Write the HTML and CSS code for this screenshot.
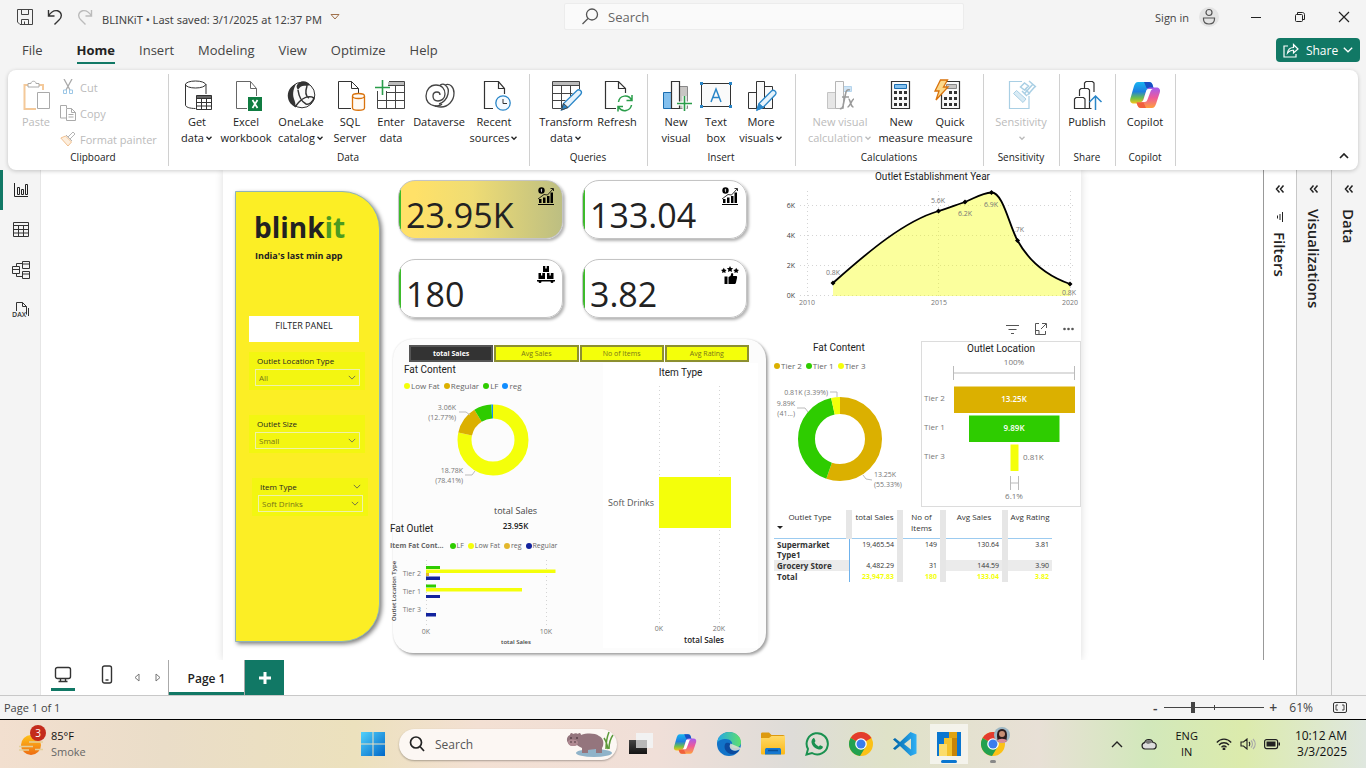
FILE: index.html
```html
<!DOCTYPE html>
<html lang="en">
<head>
<meta charset="utf-8">
<title>BLINKiT - Power BI Desktop</title>
<link rel="stylesheet" href="styles.css">
</head>
<body>
<svg class="defs" aria-hidden="true">
  <defs>
    <linearGradient id="cpA" x1="0" y1="0" x2="0" y2="1"><stop offset="0" stop-color="#18b4f0"/><stop offset=".45" stop-color="#1e7fe0"/><stop offset=".75" stop-color="#6fc04a"/><stop offset="1" stop-color="#f5c518"/></linearGradient>
    <linearGradient id="cpB" x1="0" y1="0" x2="0" y2="1"><stop offset="0" stop-color="#a45cf0"/><stop offset=".5" stop-color="#ee5a9a"/><stop offset="1" stop-color="#ffa03c"/></linearGradient>
    <linearGradient id="win" x1="0" y1="0" x2="1" y2="1"><stop offset="0" stop-color="#52d1fb"/><stop offset="1" stop-color="#0067c8"/></linearGradient>
    <linearGradient id="edge" x1="0" y1="0" x2="1" y2="0"><stop offset="0" stop-color="#23a7e8"/><stop offset="1" stop-color="#5fe06c"/></linearGradient>
    <linearGradient id="folder" x1="0" y1="0" x2="0" y2="1"><stop offset="0" stop-color="#ffd968"/><stop offset="1" stop-color="#fcb815"/></linearGradient>
    <linearGradient id="sun" x1="0" y1="0" x2="0" y2="1"><stop offset="0" stop-color="#ffc21a"/><stop offset="1" stop-color="#ee6c12"/></linearGradient>
    <linearGradient id="vs" x1="0" y1="0" x2="1" y2="0"><stop offset="0" stop-color="#0065a9"/><stop offset="1" stop-color="#2fb0f5"/></linearGradient>
    <linearGradient id="tv" x1="0" y1="0" x2="0" y2="1"><stop offset="0" stop-color="#444"/><stop offset="1" stop-color="#141414"/></linearGradient>
    <symbol id="copilot" viewBox="0 0 32 32">
      <path d="M9 3h11c2 0 3 1 3.600 3l.9 3h-3c-2 0-3 1-3.700 3l-3 9c-.8 2.500-2 3.500-4 3.500H5c-3 0-4.500-2-3.600-5L5 7c1-2.700 2-4 4-4z" fill="url(#cpA)"/>
      <path d="M15 3h5c2 0 3 1 3.600 3l.9 3h-7z" fill="#1a4fc4"/>
      <path d="M23 29H12c-2 0-3-1-3.600-3l-.9-2.500h3c2 0 3-1 3.700-3l3-8.500c.8-2.500 2-3.500 4-3.500h6c3 0 4.500 2 3.600 5L27 25c-1 2.700-2 4-4 4z" fill="url(#cpB)"/>
      <path d="M17 29h-5c-2 0-3-1-3.600-3l-.9-2.500h7z" fill="#f0603c"/>
      <path d="M19 10h5c-1 0-2 1-2.500 2.500l-3 8c-.6 1.700-1.500 2.500-3 2.500H12c1 0 2-1 2.500-2.500l2.500-8c.4-1.500 1-2.500 2-2.500z" fill="#fff"/>
    </symbol>
    <symbol id="chrome" viewBox="0 0 24 24">
      <circle cx="12" cy="12" r="12" fill="#fbc116"/>
      <path d="M12 12 1.600 6A12 12 0 0 1 22.400 6z" fill="#e33b2e"/>
      <path d="M1.600 6A12 12 0 0 0 11 24l5.800-9.500L12 12z" fill="#22a150"/>
      <circle cx="12" cy="12" r="5.800" fill="#fff"/><circle cx="12" cy="12" r="4.500" fill="#3b7ded"/>
    </symbol>
    <symbol id="growth" viewBox="0 0 18 18">
      <circle cx="4.500" cy="3.500" r="3.200"/><path d="M4.500 1.800v3.400M3.600 3h1.600" stroke="#ddd" stroke-width=".8" fill="none"/>
      <path d="M1 12 7 7.500l3.500.5L16 2M13.500 1.500H16.500V4" fill="none" stroke="#000" stroke-width=".8"/>
      <path d="M2 12h2.500v4H2zM6 10.500h2.500V16H6zM10 9h2.500v7H10zM13.500 5.500H16V16h-2.500zM1 17h16v1H1z"/>
    </symbol>
    <symbol id="chev" viewBox="0 0 8 8"><path d="M1.500 2.800 4 5.300l2.500-2.500" fill="none" stroke="currentColor" stroke-width="1.300"/></symbol>
    <symbol id="pane" viewBox="0 0 10 10"><path d="M4.500 1.500 1.500 5l3 3.500M8.500 1.500l-3 3.500 3 3.500" fill="none" stroke="#222" stroke-width="1.500"/></symbol>
  </defs>
</svg>

<header class="titlebar">
  <div class="title-left">
    <button class="icon-btn" aria-label="Save"><svg width="16" height="16" viewBox="0 0 16 16" fill="none" stroke="#444"><path d="M.5.5h15v15H3l-2.500-2.500zM4.500.5v5h7v-5M4.500 15.500v-5h7v5M7.500 12.500v3"/></svg></button>
    <button class="icon-btn" aria-label="Undo"><svg width="16" height="16" viewBox="0 0 16 16" fill="none" stroke="#333" stroke-width="1.400"><path d="M1.500 1v6h6M1.500 7C4 3 7 1 10.500 1.800 15 3 15.500 8 12 11l-4.500 4.500"/></svg></button>
    <button class="icon-btn" aria-label="Redo"><svg width="16" height="16" viewBox="0 0 16 16" fill="none" stroke="#bbb" stroke-width="1.400"><path d="M14.500 1v6h-6M14.500 7C12 3 9 1 5.500 1.800 1 3 .5 8 4 11l4.500 4.500"/></svg></button>
    <span class="doc-name">BLINKiT&nbsp;• Last saved: 3/1/2025 at 12:37 PM</span>
    <svg width="10" height="6" viewBox="0 0 10 6" fill="none" stroke="#a0714c"><path d="M1 .5h8L5 5z"/></svg>
  </div>
  <label class="search">
    <svg width="18" height="18" viewBox="0 0 18 18" fill="none" stroke="#555" stroke-width="1.300"><circle cx="11" cy="6.500" r="5.500"/><path d="M7 10.500 1.500 16"/></svg>
    <input type="text" placeholder="Search" aria-label="Search">
  </label>
  <div class="title-right">
    <a href="#" class="signin">Sign in</a>
    <span class="avatar"><svg width="14" height="18" viewBox="0 0 14 18" fill="none" stroke="#555" stroke-width="1.200"><circle cx="7" cy="4.500" r="3"/><path d="M1.500 10h11v1c0 3-2.200 5-5.500 5s-5.500-2-5.500-5z"/></svg></span>
    <button class="win-btn" aria-label="Minimize"><svg width="12" height="12" viewBox="0 0 12 12" stroke="#222"><path d="M1 6.500h10"/></svg></button>
    <button class="win-btn" aria-label="Restore"><svg width="12" height="12" viewBox="0 0 12 12" fill="none" stroke="#222"><rect x="1.500" y="3.500" width="7" height="7" rx="1"/><path d="M3.500 3V1.500h5c1 0 2 .8 2 2v5H9"/></svg></button>
    <button class="win-btn" aria-label="Close"><svg width="12" height="12" viewBox="0 0 12 12" stroke="#222" stroke-width="1.200"><path d="m1 1 10 10M11 1 1 11"/></svg></button>
  </div>
</header>

<nav class="tabs">
  <a href="#" class="tab tab-file">File</a>
  <a href="#" class="tab active">Home</a>
  <a href="#" class="tab">Insert</a>
  <a href="#" class="tab">Modeling</a>
  <a href="#" class="tab">View</a>
  <a href="#" class="tab">Optimize</a>
  <a href="#" class="tab">Help</a>
  <button class="share"><svg width="16" height="15" viewBox="0 0 16 15" fill="none" stroke="#fff" stroke-width="1.200"><path d="M5 3H1v11h12v-3M4.500 10c.5-4 3-5.500 6-5.500V1.500L15 6l-4.500 4V7.300C8 7 6 8 4.500 10z"/></svg>Share<svg width="10" height="6" viewBox="0 0 10 6" fill="none" stroke="#fff" stroke-width="1.300"><path d="m.8.8 4.200 4 4.200-4"/></svg></button>
</nav>

<section class="ribbon">
  <div class="group g-clip">
    <div class="items">
      <button class="tool w36 off"><svg class="ico" viewBox="0 0 32 32" fill="none"><path d="M8 6H4.500v24H16M19 6h4v5" stroke="#f4c99a" stroke-width="2"/><path d="M8 8V4.500h3c0-3 5-3 5 0h3V8z" stroke="#aaa"/><path d="M17.500 13.500h12v16h-12z" stroke="#aaa" fill="#fff"/></svg><span>Paste</span></button>
      <div class="minis">
        <button class="mini"><svg width="16" height="16" viewBox="0 0 16 16" fill="none" stroke="#aaa"><path d="m4 0 6 11M12 0 6 11" stroke-width="1.300"/><path d="M3.500 11h3v3.500h-3zM9.500 11h3v3.500h-3z" stroke="#9cc7e6"/></svg>Cut</button>
        <button class="mini"><svg width="16" height="16" viewBox="0 0 16 16" fill="none" stroke="#aaa"><path d="M6 13H.5V.500h6V3M6.500 3.500h5l4 4v8h-9zM11.500 3.500v4h4M8.500 9.500h5M8.500 12h5"/></svg>Copy</button>
        <button class="mini"><svg width="16" height="16" viewBox="0 0 16 16" fill="none" stroke="#b5b5b5"><path d="m6 4 6 6M8 6l5-5 2 2-5 5"/><path d="M5.500 5 .8 7l7.200 8 3.500-4z" stroke="#f0c090" fill="#fdeedd"/></svg>Format painter</button>
      </div>
    </div>
    <div class="glabel">Clipboard</div>
  </div>

  <div class="group g-data">
    <div class="items">
      <button class="tool w40"><svg class="ico" viewBox="0 0 32 32" fill="none" stroke="#333"><path d="M4.500 5v21c0 2 4 3.500 10 3.500M25 5v10"/><ellipse cx="14.500" cy="5.500" rx="10" ry="3.500"/><path d="M15.500 16.500h15v14h-15z" fill="#fff"/><path d="M15.500 17h15v2h-15z" fill="#999"/><path d="M15.500 19.500h15M15.500 23.500h15M15.500 27h15M20.500 19v11M25.500 19v11"/></svg><span>Get<br>data<svg class="cv"><use href="#chev"/></svg></span></button>
      <button class="tool w54"><svg class="ico" viewBox="0 0 32 32" fill="none" stroke="#666"><path d="M17 29.500H6.500v-27h14l6 7V17M20.500 2.500v7h6"/><rect x="18" y="18" width="14" height="14" fill="#107c41" stroke="none"/><path d="m22.500 21 5 8M27.500 21l-5 8" stroke="#fff" stroke-width="1.700"/></svg><span>Excel<br>workbook</span></button>
      <button class="tool w52"><svg class="ico" viewBox="0 0 32 32"><circle cx="17" cy="16" r="12.800" fill="#fafafa" stroke="#333"/><path d="M11 5c-6 2-9 8-8 14 1 5 4 7 7 9 1-3 0-5-1-8-2-6 0-11 2-15z" fill="#333"/><path d="M12 6c3-5 10-5 13 0l-3 1c-4-1-7 0-9 4-1-2-2-3-1-5z" fill="#333"/><path d="M13 11c1 7 4 12 8 14 3 1 7-2 8-6-5-3-12-1-19 9M22 7c-2 6-2 10 2 12" fill="none" stroke="#333" stroke-width="1.500"/></svg><span>OneLake<br>catalog<svg class="cv"><use href="#chev"/></svg></span></button>
      <button class="tool w42"><svg class="ico" viewBox="0 0 32 32" fill="none" stroke="#333"><path d="M17 29.500H4.500v-27h13l7 7V14M17.500 2.500v7h7"/><path d="M18.500 17v12c0 3 12 3 12 0V17" stroke="#d9730d" fill="#fffaf4" stroke-width="1.300"/><ellipse cx="24.500" cy="17" rx="6" ry="2.500" stroke="#d9730d" fill="#fffaf4" stroke-width="1.300"/></svg><span>SQL<br>Server</span></button>
      <button class="tool w36"><svg class="ico" viewBox="0 0 32 32" fill="none" stroke="#444"><path d="M2.500 12v17.500h27v-27H14"/><path d="M13 3h16v3H13z" fill="#bbb" stroke="none"/><path d="M13 6.500h16.500M12 13.500h17M2.500 21.500h27M11.500 12v17M20.500 7v22"/><path d="M0 8.500h15M7.500 1v15" stroke="#2a9d4a" stroke-width="1.600"/></svg><span>Enter<br>data</span></button>
      <button class="tool w56"><svg class="ico" viewBox="0 0 32 32" fill="none" stroke="#444" stroke-width="1.300"><path d="M12 27c-5-1-9-4-9-10S7 6 13 6s9 4 9 9-4 7-7 7-5-2-5-5 2-4 4-4 3 1 3 3M12 27c4 0 6-1 7-2M17 6c2-1 4-1 5 0"/><path d="M22 6c5-2 9 2 9 8 0 8-6 14-13 14-3 0-5-1-6-1M22 6c3 2 4 5 3 9-1 5-5 9-9 10"/></svg><span>Dataverse</span></button>
      <button class="tool w50"><svg class="ico" viewBox="0 0 32 32" fill="none" stroke="#333"><path d="M15 29.500H6.500v-27h14l6 7V15M20.500 2.500v7h6" stroke-width="1.200"/><circle cx="25" cy="24" r="7.200" stroke="#2a86c8" fill="#f4faff" stroke-width="1.300"/><path d="M25 20v4.500h4"/></svg><span>Recent<br>sources<svg class="cv"><use href="#chev"/></svg></span></button>
    </div>
    <div class="glabel">Data</div>
  </div>

  <div class="group">
    <div class="items">
      <button class="tool w56"><svg class="ico" viewBox="0 0 32 32" fill="none" stroke="#444"><path d="M11 29.500H2.500v-27h27V10"/><path d="M3 3h26v3H3z" fill="#bbb" stroke="none"/><path d="M2.500 6.500h27M2.500 14.500h20M2.500 21.500h13M11.500 7v22M20.500 7v10"/><path d="m11.500 31 2-6.500L27 11.500c2-2 6 1 3.800 3.800L18 28.500z" fill="#e6f3fc" stroke="#2a86c8" stroke-width="1.300"/><path d="m11.500 31 2-6.500 4.500 4z" fill="#2a86c8"/></svg><span>Transform<br>data<svg class="cv"><use href="#chev"/></svg></span></button>
      <button class="tool w42"><svg class="ico" viewBox="0 0 32 32" fill="none" stroke="#333"><path d="M15 29.500H4.500v-27h13l7 7V14M17.500 2.500v7h7" stroke-width="1.200"/><path d="M17.500 23c1-7 10-8 13-2M31 16v5.500h-5.500M30.500 26c-1 6-9 8-13 2M17 32.500v-5h5" stroke="#2a9d4a" stroke-width="1.500"/></svg><span>Refresh</span></button>
    </div>
    <div class="glabel">Queries</div>
  </div>

  <div class="group">
    <div class="items">
      <button class="tool w40"><svg class="ico" viewBox="0 0 32 32"><path d="M3.500 13.500h8v16h-8z" fill="#83c0ee" stroke="#1a6db0"/><path d="M19.500 7.500h8v22h-8z" fill="#c8c6c4" stroke="#888"/><path d="M11.500 2.500h8v27h-8z" fill="#fafafa" stroke="#333" stroke-width="1.200"/><path d="M17 24.500h15M24.500 17v15" stroke="#fff" stroke-width="4"/><path d="M17 24.500h15M24.500 17v15" stroke="#2a9d4a" stroke-width="1.600"/></svg><span>New<br>visual</span></button>
      <button class="tool w36"><svg class="ico" viewBox="0 0 32 32" fill="none"><path d="M1.500 4.500h29v23h-29z" stroke="#333" fill="#fafafa"/><path d="M0 3h3v3H0zM29 3h3v3h-3zM0 26h3v3H0zM29 26h3v3h-3z" fill="#2a86c8"/><path d="m11 23 5-13 5 13M12.500 18.500h7" stroke="#2a86c8" stroke-width="1.500"/></svg><span>Text<br>box</span></button>
      <button class="tool w50"><svg class="ico" viewBox="0 0 32 32" fill="#fafafa" stroke="#333"><path d="M3.500 13.500h8v16h-8zM19.500 7.500h8v22h-8zM11.500 2.500h8v27h-8z"/><path d="m12 31 2-6.500L26.500 12c2-2 6 1 3.800 3.800L18 28.500z" fill="#e6f3fc" stroke="#2a86c8" stroke-width="1.300"/><path d="m12 31 2-6.500 4.500 4z" fill="#2a86c8" stroke="#2a86c8"/></svg><span>More<br>visuals<svg class="cv"><use href="#chev"/></svg></span></button>
    </div>
    <div class="glabel">Insert</div>
  </div>

  <div class="group">
    <div class="items">
      <button class="tool w72 off"><svg class="ico" viewBox="0 0 32 32"><path d="M3.500 13.500h8v16h-8z" fill="#e6e6e6" stroke="#c4c4c4"/><path d="M19.500 7.500h8v5h-8z" fill="#cfe5f6" stroke="#b5d4ec"/><path d="M11.500 2.500h8v27h-8z" fill="#fafafa" stroke="#b5b5b5"/><path d="M26 11c-3-1-4 1-4.500 4l-2.500 12c-.5 2-1.500 3-3 2.500M18 18h7M24.500 20c2 0 2 8 5 8M30 20c-2 0-4 8-6.500 8" fill="none" stroke="#9a9a9a" stroke-width="1.600"/></svg><span>New visual<br>calculation<svg class="cv"><use href="#chev"/></svg></span></button>
      <button class="tool w46"><svg class="ico" viewBox="0 0 32 32"><path d="M6.500 2.500h18v27h-18z" fill="#fafafa" stroke="#333" stroke-width="1.200"/><path d="M9.500 5.500h12v4h-12z" fill="#83c0ee" stroke="#1a6db0"/><path d="M9 12h3v3H9zm5 0h3v3h-3zm5 0h3v3h-3zM9 18h3v3H9zm5 0h3v3h-3zm5 0h3v3h-3zM9 24h3v3H9zm5 0h3v3h-3zm5 0h3v3h-3z" fill="#333"/></svg><span>New<br>measure</span></button>
      <button class="tool w48"><svg class="ico" viewBox="0 0 32 32"><path d="M7.500 2.500h18v27h-18z" fill="#fafafa" stroke="#333" stroke-width="1.200"/><path d="M12.500 5.500h10v4h-10z" fill="#c8c6c4" stroke="#888"/><path d="M15 12h3v3h-3zm5 0h3v3h-3zM10 18h3v3h-3zm5 0h3v3h-3zm5 0h3v3h-3zM10 24h3v3h-3zm5 0h3v3h-3zm5 0h3v3h-3z" fill="#333"/><path d="M6.500 1h7l-4 7h4.500L2 21l3-9H1z" fill="#fbd88a" stroke="#d9730d" stroke-width="1.300"/></svg><span>Quick<br>measure</span></button>
    </div>
    <div class="glabel">Calculations</div>
  </div>

  <div class="group">
    <div class="items">
      <button class="tool w58 off"><svg class="ico" viewBox="0 0 32 32" fill="none" stroke="#a9cfe4"><path d="M17 2.500H4.500v27h19.500V17" stroke-width="1.200"/><path d="m8.500 14.500 3-3L21 20l-3 3.500z" fill="#d8ebf5"/><path d="m15.500 8 4-4 4 3-4 4zM20 14l8-9M22.500 16l8-9M24 2l7 6M17 12l5 5M20 10l5 5" stroke-width="1.500"/></svg><span>Sensitivity<br><svg class="cv"><use href="#chev"/></svg></span></button>
    </div>
    <div class="glabel">Sensitivity</div>
  </div>

  <div class="group">
    <div class="items">
      <button class="tool w38"><svg class="ico" viewBox="0 0 32 32" fill="none" stroke="#333" stroke-width="1.200"><path d="M13.500 9V4L15 2.500h6.500L23 4v9M8.500 17v-6L10 9.500h7l1.500 1.500v7M3.500 29.500V20L5 18.500h7.500L14 20v9.500zM14 29.500h6.500M18.500 18v11"/><path d="M24.500 31V17M18.500 23l6-6 6 6" stroke="#2a86c8" stroke-width="1.500"/></svg><span>Publish</span></button>
    </div>
    <div class="glabel">Share</div>
  </div>

  <div class="group">
    <div class="items">
      <button class="tool w42"><svg class="ico"><use href="#copilot"/></svg><span>Copilot</span></button>
    </div>
    <div class="glabel">Copilot</div>
  </div>
  <button class="collapse" aria-label="Collapse the ribbon"><svg width="10" height="6" viewBox="0 0 10 6" fill="none" stroke="#222" stroke-width="1.700"><path d="M1 5l4-4 4 4"/></svg></button>
</section>

<main class="main">
  <nav class="side">
    <button class="side-btn on" aria-label="Report view"><svg width="16" height="16" viewBox="0 0 16 16" fill="none" stroke="#222"><path d="M1.500 1v13.500H15M4.500 5.500h2v7h-2zM8.500 7.500h2v5h-2zM12.500 2.500h2v10h-2z"/></svg></button>
    <button class="side-btn" aria-label="Table view"><svg width="18" height="16" viewBox="0 0 18 16" fill="none" stroke="#333"><path d="M1.500.500h15v14h-15zM1.500 3.500h15M1.500 7.500h15M1.500 11h15M6.500 3v12M11.500 3v12"/></svg></button>
    <button class="side-btn" aria-label="Model view"><svg width="18" height="18" viewBox="0 0 18 18" fill="none" stroke="#333"><path d="M.500 5.500h7v7h-7zM.500 8.500h7M10.500.500h7v7h-7zM10.500 3h7M10.500 10.500h7v7h-7zM10.500 13h7M4.500 5V2.500h6M4.500 13v2.500h6"/></svg></button>
    <button class="side-btn" aria-label="DAX query view"><svg width="20" height="18" viewBox="0 0 20 18" fill="none" stroke="#333"><path d="M5.500 10V1.500h6l4 4v8M11.500 1.500v4h4M17.500 7v8"/><text x="1" y="16" font-size="7" font-weight="600" fill="#333" stroke="none">DAX</text></svg></button>
  </nav>

  <div class="center">
    <div class="canvas-row">
      <div class="canvas">
        <article class="report">
          <aside class="panel">
            <h1 class="logo">blink<span>it</span></h1>
            <p class="tagline">India's last min app</p>
            <div class="panel-title">FILTER PANEL</div>
            <div class="slicer"><label for="loc">Outlet Location Type</label><div class="sel"><select id="loc"><option>All</option></select><svg viewBox="0 0 10 6"><path d="m1 1 4 4 4-4"/></svg></div></div>
            <div class="slicer"><label for="size">Outlet Size</label><div class="sel"><select id="size"><option>Small</option></select><svg viewBox="0 0 10 6"><path d="m1 1 4 4 4-4"/></svg></div></div>
            <div class="slicer inset"><label for="item">Item Type<svg viewBox="0 0 10 6"><path d="m1 1 4 4 4-4"/></svg></label><div class="sel"><select id="item"><option>Soft Drinks</option></select><svg viewBox="0 0 10 6"><path d="m1 1 4 4 4-4"/></svg></div></div>
          </aside>

          <div class="mid">
            <div class="kpis">
              <div class="kpi gold"><span>23.95K</span><svg><use href="#growth"/></svg></div>
              <div class="kpi"><span>133.04</span><svg><use href="#growth"/></svg></div>
              <div class="kpi"><span>180</span><svg viewBox="0 0 18 18"><path d="M6 0h2.300v2.500h1.400V0H12v6H6zM1.500 7H4v2.500h1.300V7H8v6H1.500zM10 7h2.500v2.500h1.300V7h2.700v6H10zM0 14h18v1.500h-1.500a1.500 1.500 0 0 1-3 0h-9a1.500 1.500 0 0 1-3 0H0z"/></svg></div>
              <div class="kpi"><span>3.82</span><svg viewBox="0 0 18 18"><path d="m9 0 1 2 2.200.300-1.600 1.500.4 2.200-2-1-2 1 .4-2.200L5.800 2.300 8 2zM2.800 1.800l.9 1.800 1.900.3-1.300 1.300.3 1.900-1.800-.9-1.700.9.300-1.900L0 3.900l1.900-.3zM15.200 1.800l.9 1.800 1.900.3-1.400 1.300.3 1.900-1.800-.9-1.700.9.300-1.900-1.400-1.300 2-.3zM3.500 10.500h3v7.500h-3zM7.500 11l2-1 1-3c2 0 2 1 1.500 3h3.300c1 0 .9 1 .7 2l-1 4.500c-.3 1-.8 1.500-2 1.500H7.500z"/></svg></div>
            </div>

            <section class="board">
              <div class="switch">
                <button class="sel-on">total Sales</button><button>Avg Sales</button><button>No of Items</button><button>Avg Rating</button>
              </div>
              <div class="board-body">
                <div class="board-left">
                  <h2 class="vt pad">Fat Content</h2>
                  <ul class="legend f8 pad"><li class="c-y">Low Fat</li><li class="c-g">Regular</li><li class="c-l">LF</li><li class="c-b">reg</li></ul>
                  <svg class="chart" viewBox="0 0 210 111">
                    <g transform="rotate(-90 100 48)" fill="none" stroke-width="14">
                      <circle cx="100" cy="48" r="28.500" stroke="#f4ff0a" pathLength="100" stroke-dasharray="78.400 100"/>
                      <circle cx="100" cy="48" r="28.500" stroke="#dbb000" pathLength="100" stroke-dasharray="12.800 100" stroke-dashoffset="-78.400"/>
                      <circle cx="100" cy="48" r="28.500" stroke="#2ecc00" pathLength="100" stroke-dasharray="8.100 100" stroke-dashoffset="-91.200"/>
                      <circle cx="100" cy="48" r="28.500" stroke="#118dff" pathLength="100" stroke-dasharray=".7 100" stroke-dashoffset="-99.300"/>
                    </g>
                    <path class="lead" d="M66 20h7l4 3M72 83h7l3-4"/>
                    <g class="t7" text-anchor="end"><text x="63" y="18">3.06K</text><text x="63" y="28">(12.77%)</text><text x="70" y="81">18.78K</text><text x="70" y="91">(78.41%)</text></g>
                  </svg>
                  <div class="pair">
                    <h2 class="vt">Fat Outlet</h2>
                    <div class="card"><span>total Sales</span><b>23.95K</b></div>
                  </div>
                  <ul class="legend f7 out"><li class="head">Item Fat Cont...</li><li class="c-l">LF</li><li class="c-y">Low Fat</li><li class="c-o">reg</li><li class="c-n">Regular</li></ul>
                  <svg class="chart out" viewBox="0 0 213 98">
                    <path class="grid" d="M36.500 8v68M156.500 8v68"/>
                    <path fill="#2ecc00" d="M36 14h14v3H36zM36 32.500h10v3H36z"/>
                    <path fill="#f4ff0a" d="M36 17.500h129.500v3.500H36zM36 36h96v3.500H36z"/>
                    <path fill="#e3b72c" d="M36 21h3v3h-3z"/>
                    <path fill="#12239e" d="M36 24.500h14v3.500H36zM36 43h14v3H36zM36 61h10v3.500H36z"/>
                    <g class="t7" text-anchor="end"><text x="31" y="24">Tier 2</text><text x="31" y="42">Tier 1</text><text x="31" y="60">Tier 3</text></g>
                    <g class="t7" text-anchor="middle"><text x="36" y="82">0K</text><text x="156" y="82">10K</text></g>
                    <text class="t6" x="126" y="92" text-anchor="middle">total Sales</text>
                    <text class="t6" transform="translate(6 39) rotate(-90)" text-anchor="middle">Outlet Location Type</text>
                  </svg>
                </div>
                <div class="board-right">
                  <h2 class="vt mid-t">Item Type</h2>
                  <svg class="chart" viewBox="0 0 155 268">
                    <path class="grid" d="M56.500 6v240M116.500 6v240"/>
                    <path fill="#f4ff0a" d="M56 97h72v51H56z"/>
                    <text class="t9" x="51" y="126" text-anchor="end">Soft Drinks</text>
                    <g class="t7" text-anchor="middle"><text x="56" y="251">0K</text><text x="116" y="251">20K</text></g>
                    <text class="tt" x="101" y="263" text-anchor="middle">total Sales</text>
                  </svg>
                </div>
              </div>
            </section>
          </div>

          <div class="right">
            <section class="year">
              <h2 class="vt">Outlet Establishment Year</h2>
              <svg class="chart" viewBox="0 0 311 130">
                <path class="grid" d="M30 21.500h275M30 51.500h275M30 81.500h275M30 111.500h275M37.500 7v105M168.500 7v105M300.500 7v105"/>
                <path fill="#f4ff0a" fill-opacity=".4" d="M63 99C100 66 135 37 168.500 27 178 24 186 21 195 18c10-4 17-9 26.500-9.500C233 8.500 239 41 247.500 56.500 260 79 280 93 300 100v12H63z"/>
                <path fill="none" stroke="#000" stroke-width="1.800" d="M63 99C100 66 135 37 168.500 27 178 24 186 21 195 18c10-4 17-9 26.500-9.500C233 8.500 239 41 247.500 56.500 260 79 280 93 300 100"/>
                <path d="m63 96.500 2.500 2.500-2.500 2.500-2.500-2.500zM168.500 24.500l2.500 2.500-2.500 2.500-2.500-2.500zM195 15.500l2.500 2.500-2.500 2.500-2.500-2.500zM221.500 6l2.500 2.500-2.500 2.500-2.500-2.500zM247.500 54l2.500 2.500-2.500 2.500-2.500-2.500zM300 97.500l2.500 2.500-2.500 2.500-2.500-2.500z"/>
                <g class="t7 dark" text-anchor="end"><text x="25" y="24">6K</text><text x="25" y="54">4K</text><text x="25" y="84">2K</text><text x="25" y="114">0K</text></g>
                <g class="t7" text-anchor="middle"><text x="37" y="121">2010</text><text x="169" y="121">2015</text><text x="300" y="121">2020</text><text x="63" y="91">0.8K</text><text x="168" y="19">5.6K</text><text x="195" y="32">6.2K</text><text x="221" y="23">6.9K</text><text x="249" y="48">.7K</text><text x="299" y="111">0.8K</text></g>
              </svg>
              <div class="vtools">
                <button aria-label="Filters on visual"><svg width="13" height="12" viewBox="0 0 13 12" stroke="#555"><path d="M0 2.500h13M2.500 6.500h8M5 10.500h3"/></svg></button>
                <button aria-label="Focus mode"><svg width="13" height="12" viewBox="0 0 13 12" fill="none" stroke="#555"><path d="M5 .500H1.500v11h10V8M8 .500h4.500V5M12 1 7 6M1 7.500h4v4"/></svg></button>
                <button aria-label="More options"><svg width="13" height="12" viewBox="0 0 13 12" fill="#555"><circle cx="2.500" cy="6" r="1.300"/><circle cx="6.500" cy="6" r="1.300"/><circle cx="10.500" cy="6" r="1.300"/></svg></button>
              </div>
            </section>
            <div class="duo">
              <section class="fat">
                <h2 class="vt">Fat Content</h2>
                <ul class="legend f8"><li class="c-g">Tier 2</li><li class="c-l">Tier 1</li><li class="c-y">Tier 3</li></ul>
                <svg class="chart" viewBox="0 0 151 135">
                  <g transform="rotate(-90 70 67)" fill="none" stroke-width="17">
                    <circle cx="70" cy="67" r="33.500" stroke="#dbb000" pathLength="100" stroke-dasharray="55.300 100"/>
                    <circle cx="70" cy="67" r="33.500" stroke="#2ecc00" pathLength="100" stroke-dasharray="41.300 100" stroke-dashoffset="-55.300"/>
                    <circle cx="70" cy="67" r="33.500" stroke="#f4ff0a" pathLength="100" stroke-dasharray="3.400 100" stroke-dashoffset="-96.600"/>
                  </g>
                  <path class="lead" d="M60 20h7v5M27 36h8l3 4M102 108l-6-1-3-4"/>
                  <g class="t7"><text x="58" y="23" text-anchor="end">0.81K (3.39%)</text><text x="25" y="34" text-anchor="end">9.89K</text><text x="25" y="44" text-anchor="end">(41...)</text><text x="104" y="105">13.25K</text><text x="104" y="115">(55.33%)</text></g>
                </svg>
              </section>
              <section class="funnel">
                <h2 class="vt">Outlet Location</h2>
                <svg class="chart" viewBox="0 0 158 150">
                  <path class="lead" d="M31.500 11v14M152.500 11v14M31.500 18h121M88.500 121v14M96.500 121v14M88.500 128h8"/>
                  <path fill="#dbb000" d="M32 31.500h121v26.500H32z"/><path fill="#2ecc00" d="M47 60.500h90.500v26.500H47z"/><path fill="#f4ff0a" d="M88.500 89.500H96.500v26.500h-8z"/>
                  <g class="t8"><text x="92" y="10" text-anchor="middle">100%</text><text x="2" y="46">Tier 2</text><text x="2" y="75">Tier 1</text><text x="2" y="104">Tier 3</text><text x="101" y="105">0.81K</text><text x="92" y="144" text-anchor="middle">6.1%</text></g>
                  <g class="inbar" text-anchor="middle"><text x="92" y="47">13.25K</text><text x="92" y="76">9.89K</text></g>
                </svg>
              </section>
            </div>
            <table class="matrix">
              <colgroup><col class="m1"><col class="m2"><col class="m3"><col class="m4"><col class="m5"></colgroup>
              <thead><tr><th>Outlet Type<span class="sort"></span></th><th>total Sales</th><th>No of Items</th><th>Avg Sales</th><th>Avg Rating</th></tr></thead>
              <tbody>
                <tr><th>Supermarket Type1</th><td>19,465.54</td><td>149</td><td>130.64</td><td>3.81</td></tr>
                <tr class="alt"><th>Grocery Store</th><td>4,482.29</td><td>31</td><td>144.59</td><td>3.90</td></tr>
                <tr class="total"><th>Total</th><td>23,947.83</td><td>180</td><td>133.04</td><td>3.82</td></tr>
              </tbody>
            </table>
          </div>
        </article>
      </div>
      <aside class="vpane filters"><svg class="exp"><use href="#pane"/></svg><svg class="fico" viewBox="0 0 8 10" stroke="#222"><path d="M1.500 3.500v3M4 2v6M6.500 0v10"/></svg><span>Filters</span></aside>
    </div>
    <footer class="pages">
      <button class="view on" aria-label="Desktop layout"><svg width="18" height="17" viewBox="0 0 18 17" fill="none" stroke="#333" stroke-width="1.400"><rect x="1.500" y="1.500" width="15" height="11" rx="2"/><path d="M6.500 13v2M11.500 13v2M4.500 15.500h9"/></svg></button>
      <button class="view" aria-label="Mobile layout"><svg width="12" height="19" viewBox="0 0 12 19" fill="none" stroke="#333" stroke-width="1.400"><rect x="1.500" y="1" width="9" height="17" rx="2"/><path d="M4.500 15h3"/></svg></button>
      <button class="arrow" aria-label="Previous page"><svg width="6" height="9" viewBox="0 0 6 9" fill="none" stroke="#777"><path d="M5 1v7L1 4.500z"/></svg></button>
      <button class="arrow" aria-label="Next page"><svg width="6" height="9" viewBox="0 0 6 9" fill="none" stroke="#777"><path d="M1 1v7l4-3.500z"/></svg></button>
      <button class="page-tab">Page 1</button>
      <button class="add" aria-label="New page"><svg width="12" height="12" viewBox="0 0 12 12" stroke="#fff" stroke-width="3"><path d="M0 6h12M6 0v12"/></svg></button>
    </footer>
  </div>
  <aside class="vpane"><svg class="exp"><use href="#pane"/></svg><span>Visualizations</span></aside>
  <aside class="vpane"><svg class="exp"><use href="#pane"/></svg><span>Data</span></aside>
</main>

<div class="status">
  <span>Page 1 of 1</span>
  <div class="zoom">
    <button aria-label="Zoom out">-</button>
    <input type="range" min="0" max="100" value="28" aria-label="Zoom">
    <button aria-label="Zoom in">+</button>
    <span class="pct">61%</span>
    <button aria-label="Fit to page"><svg width="14" height="11" viewBox="0 0 14 11" fill="none" stroke="#333"><rect x=".5" y=".5" width="13" height="10" rx="1.500"/><path d="M5 3H3v5h2M9 3h2v5H9" stroke-width=".9"/></svg></button>
  </div>
</div>

<footer class="taskbar">
  <button class="weather">
    <span class="wicon"><svg width="24" height="24" viewBox="0 0 24 24"><circle cx="12" cy="13" r="10" fill="url(#sun)"/><path d="M0 14.500h14M0 18h10M10 10h14M16 17.500h8" stroke="#e4cf9a" stroke-width="1.500"/></svg><i class="badge">3</i></span>
    <span><b>85°F</b><br>Smoke</span>
  </button>
  <div class="apps">
    <button class="app" aria-label="Start"><svg viewBox="0 0 24 24"><path d="M0 0h11.500v11.500H0zM12.500 0H24v11.500H12.500zM0 12.500h11.500V24H0zM12.500 12.500H24V24H12.500z" fill="url(#win)"/></svg></button>
    <label class="tsearch"><svg width="16" height="16" viewBox="0 0 16 16" fill="none" stroke="#222" stroke-width="1.700"><circle cx="7" cy="6.500" r="5.500"/><path d="m11 10.500 4 4.500"/></svg><input type="text" placeholder="Search" aria-label="Search Windows">
      <svg width="48" height="26" viewBox="0 0 48 26"><ellipse cx="28" cy="22" rx="18" ry="4" fill="#8fb3c9"/><path d="M40 18c0-7 1-12 3-17M43 18c0-6 1-10 4-14M42 18c-1-5-2-8-4-11" stroke="#5c9a3a" stroke-width="1.500" fill="none"/><path d="M2 12C0 9 1 5 4 4c0-2 2-3 3-1 2-1 4-1 5 0 1-2 3-1 3 1 6-2 14-2 18 1 4 2 5 6 4 10l-1 2v5h-6v-4l-8 1v3h-6v-5c-2-1-4-2-5-3-4 2-8 1-9-2z" fill="#94757d"/><path d="M2 10c3-2 8-2 10 1 0 3-2 4-5 4s-5-2-5-5z" fill="#b08a92"/><circle cx="5" cy="11" r=".7" fill="#2a1a20"/><circle cx="9" cy="11" r=".7" fill="#2a1a20"/><circle cx="5" cy="7" r=".8" fill="#2a1a20"/><circle cx="11" cy="7" r=".8" fill="#2a1a20"/></svg></label>
    <button class="app" aria-label="Task view"><svg viewBox="0 0 24 24"><path d="M0 8h18v14H0z" fill="url(#tv)"/><path d="M7 1h17v15H7z" fill="#f2f2f2"/><path d="M7 8h11v8H7z" fill="#b8b8b8"/></svg></button>
    <button class="app" aria-label="Copilot"><svg><use href="#copilot"/></svg></button>
    <button class="app" aria-label="Edge"><svg viewBox="0 0 24 24"><circle cx="12" cy="12" r="12" fill="#1273c8"/><path d="M0 11C1 4 6 0 12 0c7 0 12 5 12 10 0 4-3 6-6 6-3 0-4-1-3-3 1-3-2-6-6-6-5 0-8 2-9 4z" fill="url(#edge)"/><path d="M8 12c-2 6 3 11 9 10 2-.5 4-2 5.500-4-3 2-8 1-9.500-2-.8-2 0-3.500 1-4-3-2-5-1.500-6 0z" fill="#0c4a9e"/><path d="M13.500 11.500c-1.500 2-1 5 1.500 6.500 3 1.500 6 .5 9-1.500-1 2-1.500 2.500-2.500 4H24V16z" fill="#e3e0d4" fill-opacity=".85"/></svg></button>
    <button class="app" aria-label="File Explorer"><svg viewBox="0 0 24 24"><path d="M0 2c0-1 .5-1.500 1.500-1.500H8L10.500 3H22c1 0 2 .8 2 2v2H0z" fill="#dd9a10"/><path d="M0 6h8l2.500-2H24v17c0 1-.5 1.500-1.500 1.500h-21C.5 22.500 0 22 0 21z" fill="url(#folder)"/><path d="M4 22.500V18c0-1.500.8-2 2-2h12c1.200 0 2 .5 2 2v4.500z" fill="#1577cf"/><path d="M7 18.500h10" stroke="#0a4f96" stroke-width="1.500"/></svg></button>
    <button class="app" aria-label="WhatsApp"><svg viewBox="0 0 24 24" fill="none"><path d="M1.500 22.500 3 17A10.600 10.600 0 1 1 7 21z" stroke="#1a9150" stroke-width="2"/><path d="M8 6.500c.8-.8 1.300-.5 1.600.3l.8 1.900c.2.500-.8 1.500-.8 1.900.8 1.700 2.200 3 4 3.800.5 0 1.200-1.300 1.700-1.200l2 1c.8.400.7 1 .2 1.900-.8 1.400-2.600 1.800-4.500 1.200-3.300-1-6-3.800-6.500-6.800-.2-1.500.4-3 1.500-4z" fill="#1a9150"/></svg></button>
    <button class="app" aria-label="Chrome"><svg><use href="#chrome"/></svg></button>
    <button class="app" aria-label="Visual Studio Code"><svg viewBox="0 0 24 24"><path d="m17.500 0 6 2.500v19l-6 2.500L7 14l-5 4-2-1.500L5 12 0 7.500 2 6l5 4zM18 6.500 11 12l7 5.500z" fill="url(#vs)"/></svg></button>
    <button class="app current" aria-label="Power BI"><svg viewBox="0 0 24 24"><path d="M0 0h24v24H0z" fill="#0a76d0"/><path d="M12 0h8v24h-8z" fill="#e0a312"/><path d="M7 6h8v18H7z" fill="#f3c22b"/><path d="M2 12h8v12H2z" fill="#fbdc6a"/><path d="M15 6h5v18h-5z" fill="#c88508"/></svg></button>
    <button class="app running" aria-label="Chrome profile"><svg><use href="#chrome"/></svg><svg class="face" viewBox="0 0 16 16"><circle cx="8" cy="8" r="8" fill="#9db7c4"/><path d="M4 15C2 7 3 2 8 2s6 5 4 13z" fill="#2e1c1c"/><circle cx="8" cy="7" r="3" fill="#c98f74"/><path d="M3 14c1-3 9-3 10 0-3 2.500-7 2.500-10 0z" fill="#d98c96"/></svg></button>
  </div>
  <div class="tray">
    <button aria-label="Hidden icons"><svg width="12" height="8" viewBox="0 0 12 8" fill="none" stroke="#222" stroke-width="1.400"><path d="m1 7 5-5 5 5"/></svg></button>
    <svg class="cloud" width="16" height="12" viewBox="0 0 16 12"><path d="M4 11a3.200 3.200 0 0 1-.5-6.300C4.500 1 10.500 0 12 4.500c4.500.3 4 6.500 0 6.500z" fill="#ddd" stroke="#222" stroke-width="1.200"/><path d="M4 4.500C5.500 1.500 10 1 11.500 4.500L7 6z" fill="#777"/></svg>
    <span class="lang">ENG<br>IN</span>
    <span class="sys">
      <svg width="16" height="12" viewBox="0 0 16 12" fill="none" stroke="#222" stroke-width="1.300"><path d="M.8 4.500c4-4.500 10.400-4.500 14.400 0M3 7c2.800-3 7.200-3 10 0M5.500 9.300c1.500-1.500 3.500-1.500 5 0"/><circle cx="8" cy="11" r=".8" fill="#222"/></svg>
      <svg width="16" height="12" viewBox="0 0 16 12" fill="none" stroke="#222" stroke-width="1.100"><path d="M1 4h2.500L7 1v10L3.500 8H1zM9 4c1 1 1 3 0 4"/><path d="M11 2.500c2 2 2 5 0 7M13 1c3 3 3 7 0 10" stroke="#aaa"/></svg>
      <svg width="16" height="12" viewBox="0 0 16 12"><rect x=".6" y="1.600" width="13" height="9" rx="2" fill="none" stroke="#222" stroke-width="1.200"/><path d="M2.500 3.500h9v5h-9zM14.500 4.500H16v3h-1.500z" fill="#222"/></svg>
    </span>
    <span class="clock">10:12 AM<br>3/3/2025</span>
  </div>
</footer>
</body>
</html>
```
FILE: styles.css
```css
* { box-sizing: border-box; }
body {
  margin: 0;
  min-height: 100vh;
  display: flex;
  flex-direction: column;
  background: #f4f4f4;
  color: #222;
  font-family: "Open Sans", "Noto Sans", sans-serif;
  font-size: 11px;
  overflow-x: hidden;
}
button, input, select { font: inherit; color: inherit; background: none; border: 0; padding: 0; margin: 0; }
a { color: inherit; text-decoration: none; }
h1, h2, p, ul { margin: 0; padding: 0; }
ul { list-style: none; }
svg { display: block; flex: none; }
.defs { position: absolute; width: 0; height: 0; }

/* Title bar */
.titlebar { display: flex; height: 34px; }
.title-left { display: flex; align-items: center; width: 564px; padding-left: 10px; white-space: nowrap; }
.icon-btn { width: 30px; height: 34px; display: grid; place-items: center; }
.doc-name { color: #444; font-family: "Noto Sans", "Open Sans", sans-serif; padding: 5px 8px 0 2px; }
.search { display: flex; align-items: center; gap: 9px; flex: 0 1 400px; height: 27px; margin-top: 3px; padding-left: 16px; background: #fafafa; border: 1px solid #ececec; border-radius: 2px; }
.search input { flex: 1; min-width: 0; font-size: 13px; outline: 0; }
.search input::placeholder { color: #666; opacity: 1; }
.title-right { flex: 1; display: flex; align-items: center; justify-content: flex-end; }
.signin { color: #444; margin-right: 10px; }
.avatar { width: 20px; height: 20px; border-radius: 50%; background: #e4e4e4; display: grid; place-items: center; margin-right: 15px; }
.win-btn { width: 44px; height: 34px; display: grid; place-items: center; }

/* Ribbon tabs */
.tabs { display: flex; align-items: flex-start; gap: 24px; height: 36px; padding: 4px 6px 0 22px; font-size: 13px; color: #444; }
.tab { line-height: 24px; height: 26px; }
.tab-file { margin-right: 10px; }
.tab.active { color: #222; font-weight: 700; border-bottom: 2px solid #117865; }
.share { margin-left: auto; width: 84px; height: 24px; display: flex; align-items: center; justify-content: center; gap: 5px; background: #117865; color: #fff; border-radius: 4px; font-size: 12px; }
.share svg:first-child { margin-right: 2px; }

/* Ribbon */
.ribbon { position: relative; z-index: 2; display: flex; height: 100px; margin: 0 8px; background: #fff; border-radius: 8px; box-shadow: 0 1px 4px rgba(0, 0, 0, .2); padding: 4px 0; }
.group { border-right: 1px solid #d0d0d0; padding: 5px 9px 0 8px; display: flex; flex-direction: column; }
.items { display: flex; gap: 2px; flex: 1; min-height: 0; }
.glabel { text-align: center; font-size: 10px; line-height: 14px; margin-bottom: 2px; white-space: nowrap; }
.tool { display: flex; flex-direction: column; align-items: center; align-self: flex-start; line-height: 16px; white-space: nowrap; text-align: center; }
.ico { width: 32px; height: 32px; margin-bottom: 3px; overflow: visible; }
.off { color: #bbb; }
.cv { display: inline-block; width: 8px; height: 8px; margin-left: 1px; vertical-align: 0; }
.w36 { width: 36px; } .w38 { width: 38px; } .w40 { width: 40px; } .w42 { width: 42px; }
.w46 { width: 46px; } .w48 { width: 48px; } .w50 { width: 50px; } .w52 { width: 52px; }
.w54 { width: 54px; } .w56 { width: 56px; } .w58 { width: 58px; } .w72 { width: 72px; }
.g-clip { width: 161px; padding-left: 10px; padding-right: 0; }
.g-data { padding-right: 10px; }
.minis { display: flex; flex-direction: column; padding-left: 4px; }
.mini { display: flex; align-items: center; gap: 4px; flex: none; height: 26px; color: #bbb; white-space: nowrap; }
.minis .mini:first-child { height: 16px; margin-bottom: 5px; }
.collapse { margin: auto 8px 6px auto; padding: 1px; }

/* Main area */
.main { flex: 1; display: flex; min-height: 0; }
.side { width: 41px; border-right: 1px solid #e6e6e6; }
.side-btn { width: 100%; height: 40px; display: grid; place-items: center; padding-right: 2px; border-left: 3px solid transparent; }
.side-btn.on { border-left-color: #117865; }
.center { flex: 1; min-width: 0; display: flex; flex-direction: column; background: #fff; }
.canvas-row { flex: 1; display: flex; }
.canvas { flex: 1; display: flex; justify-content: center; overflow: hidden; }
.report { display: grid; grid-template-columns: 145px 390px 311px; width: 858px; padding-left: 12px; background: #fff; box-shadow: 0 0 8px rgba(0, 0, 0, .14); }
.vpane { width: 35px; border-left: 1px solid #c8c8c8; display: flex; flex-direction: column; align-items: center; padding-top: 14px; }
.vpane span { writing-mode: vertical-rl; font-size: 15px; font-weight: 600; line-height: 20px; margin-top: 15px; }
.exp { width: 10px; height: 10px; }
.filters { width: 33px; border-left-color: #999; }
.fico { width: 8px; height: 10px; margin-top: 18px; }
.filters span { margin-top: 10px; }

/* Filter panel */
.panel { margin-top: 21px; height: 451px; background: #fcee25; border: 1px solid #8fb3b8; border-radius: 0 38px 38px 0; box-shadow: 2px 2px 4px rgba(0, 0, 0, .5); padding: 17px 14px 0 13px; }
.logo { font-size: 28px; line-height: 36px; padding-left: 5px; }
.logo span { color: #4b9b20; }
.tagline { font-size: 9px; line-height: 14px; font-weight: 700; padding: 4px 0 0 6px; white-space: nowrap; }
.panel-title { width: 110px; height: 26px; margin: 53px 0 10px; background: #fff; text-align: center; font-size: 9px; line-height: 20px; }
.slicer { width: 116px; height: 38px; margin-bottom: 25px; padding: 0 5px 0 6px; background: #f3f611; }
.slicer.inset { margin-left: 3px; }
.slicer label { display: flex; justify-content: space-between; align-items: center; line-height: 12px; height: 17px; padding: 0 2px; font-size: 8px; }
.slicer svg { width: 8px; height: 5px; fill: none; stroke: #555; }
.sel { position: relative; }
.sel select { display: block; width: 105px; height: 17px; border: 1px solid #eef2a8; color: #77751a; font-size: 8px; padding-left: 3px; appearance: none; line-height: 15px; }
.sel svg { position: absolute; right: 4px; top: 6px; }

/* KPI cards */
.mid { padding: 10px 0 0 13px; }
.kpis { display: grid; grid-template-columns: 165px 165px; gap: 20px 19px; padding-left: 5px; }
.kpi { display: flex; justify-content: space-between; height: 59px; padding: 6px 7px 0 7px; border: 1px solid #c4c4c4; border-radius: 17px; background: linear-gradient(to right, #3dbb2b 3px, #fff 3px) border-box; box-shadow: 2px 2px 3px rgba(0, 0, 0, .3); }
.kpi.gold { background: linear-gradient(to right, #3dbb2b 3px, transparent 3px) border-box, linear-gradient(to right, #ffe168 10%, #efdc74 45%, #bcbe82) border-box; }
.kpi span { font-size: 34px; line-height: 56px; }
.kpi svg { width: 18px; height: 18px; }

/* Switchable board */
.board { width: 373px; height: 314px; margin-top: 21px; border-radius: 20px; box-shadow: 2px 2px 3px rgba(0, 0, 0, .35), 0 0 2px rgba(0, 0, 0, .12); background: #fcfcfc; padding-top: 6px; }
.switch { display: grid; grid-template-columns: repeat(4, 1fr); gap: 1px; width: 340px; margin-left: 16px; }
.switch button { height: 17px; font-size: 7px; background: #f4ff0a; border: 2px solid #8c8f30; color: #77751a; }
.switch .sel-on { background: #333; border-color: #555; color: #fff; font-weight: 700; }
.board-body { display: flex; padding-top: 1px; }
.board-left { width: 210px; }
.board-right { width: 155px; background: #fff; height: 285px; }
.vt { font-family: Roboto, "Open Sans", sans-serif; font-size: 10px; font-weight: 400; line-height: 14px; color: #222; white-space: nowrap; }
.pad { padding-left: 11px; }
.mid-t { text-align: center; padding-top: 3px; }
.chart { width: 100%; height: auto; overflow: visible; }
.legend { display: flex; gap: 4px; color: #666; line-height: 12px; white-space: nowrap; }
.legend li { display: flex; align-items: center; gap: 1px; }
.legend li:not(.head)::before { content: ""; width: 6px; height: 6px; border-radius: 50%; background: var(--dot); }
.legend .head { font-weight: 700; margin-right: 2px; }
.f8 { font-size: 8px; margin-top: 3px; }
.f7 { font-size: 7px; margin-top: 4px; }
.out { margin-left: -3px; }
.chart.out { width: 213px; }
.c-y { --dot: #f4ff0a; } .c-g { --dot: #dbb000; } .c-l { --dot: #2ecc00; }
.c-b { --dot: #118dff; } .c-o { --dot: #e3b72c; } .c-n { --dot: #12239e; }
.pair { display: flex; justify-content: space-between; align-items: flex-end; height: 33px; margin-left: -3px; padding-right: 66px; }
.card { display: flex; flex-direction: column; align-items: center; align-self: flex-start; font-size: 9px; line-height: 15px; color: #444; }
.card b { font-size: 8px; font-weight: 600; color: #222; }
.t6, .t7, .t8, .t9 { fill: #777; }
.t6 { font-size: 6px; font-weight: 600; fill: #444; }
.t7 { font-size: 7px; }
.t7.dark { fill: #444; }
.t8 { font-size: 8px; }
.t9 { font-size: 9px; fill: #555; }
.tt { font-size: 8px; fill: #222; font-weight: 600; }
.inbar { font-size: 8px; font-weight: 600; fill: #fff; }
.grid { fill: none; stroke: #d4d4d4; stroke-dasharray: 1 3; }
.lead { fill: none; stroke: #bbb; }

/* Right column */
.year .vt { text-align: center; padding-left: 14px; }
.vtools { display: flex; justify-content: flex-end; gap: 15px; height: 27px; align-items: center; padding: 3px 6px 0 0; }
.duo { display: grid; grid-template-columns: 151px 160px; }
.fat .vt { padding-left: 43px; }
.fat .legend { padding-left: 4px; margin-top: 5px; }
.funnel { border: 1px solid #dcdcdc; }
.funnel .vt { text-align: center; line-height: 13px; }
.matrix { width: 278px; margin: 3px 0 0 4px; border-collapse: collapse; table-layout: fixed; font-size: 7px; line-height: 10px; color: #333; }
.m1 { width: 75px; } .m2 { width: 51px; } .m3 { width: 43px; } .m4 { width: 62px; } .m5 { width: 47px; }
.matrix th, .matrix td { padding: 1px 3px 0; text-align: right; vertical-align: top; border-right: 6px solid #e6e6e6; }
.matrix tr > :last-child { border-right: 0; }
.matrix thead th { height: 28px; padding: 1px 0 0; font-size: 8px; font-weight: 400; text-align: center; border-bottom: 1px solid #9ccbf0; line-height: 11px; }
.matrix tbody th { text-align: left; font-size: 8px; border-right: 1px solid #6fb2ec; }
.alt > :nth-child(n+4), .alt > :first-child { background: #ebebeb; }
.total td { color: #f4ff0a; font-weight: 700; }
.sort { display: block; width: 0; border: 3px solid transparent; border-top-color: #222; margin: 4px 0 0 3px; }

/* Page tabs */
.pages { display: flex; align-items: stretch; height: 35px; padding-left: 10px; }
.view { width: 24px; margin: 0 20px 4px 0; display: grid; place-items: center; border-bottom: 3px solid transparent; }
.view.on { border-bottom-color: #117865; }
.arrow { width: 21px; display: grid; place-items: center; }
.view + .arrow { margin-left: -13px; }
.page-tab { width: 77px; border: 1px solid #aaa; border-width: 0 1px; box-shadow: inset 0 -3px #117865; font-size: 12px; font-weight: 600; padding-top: 2px; }
.add { width: 39px; background: #117865; display: grid; place-items: center; }

/* Status bar */
.status { display: flex; justify-content: space-between; align-items: center; height: 25px; padding: 0 19px 0 4px; border-top: 1px solid #c8c8c8; border-bottom: 1px solid #000; color: #444; }
.zoom { display: flex; align-items: center; gap: 5px; }
.zoom button { font-size: 14px; font-weight: 600; line-height: 20px; min-width: 8px; }
.zoom .pct { margin: 0 15px 0 7px; font-size: 12px; }
.zoom input { appearance: none; width: 100px; height: 11px; margin: 0; background: linear-gradient(#444, #444) 50% 50% / 1px 5px no-repeat, linear-gradient(#444, #444) 50% 50% / 100% 1px no-repeat; }
.zoom input::-webkit-slider-thumb { appearance: none; width: 4px; height: 11px; background: #444; }

/* Taskbar */
.taskbar { display: grid; grid-template-columns: 1fr auto 1fr; align-items: center; height: 48px; background: linear-gradient(to right, #f2dfcf 0%, #eaddc8 12%, #ece1bd 26%, #f3e0d3 35%, #f0dfd8 48%, #dedcd8 58%, #dfe2c8 65%, #e8e0d6 76%, #d2e8bb 84%, #dcebac 91%, #dfe7df 100%); }
.weather { display: flex; align-items: center; gap: 8px; padding-left: 19px; text-align: left; line-height: 16px; font-size: 11px; color: #666; }
.weather b { font-weight: 400; color: #111; }
.wicon { position: relative; }
.badge { position: absolute; top: -7px; right: -3px; width: 16px; height: 16px; border-radius: 50%; background: #c42b1c; color: #fff; font-style: normal; font-size: 10px; text-align: center; line-height: 16px; }
.apps { display: flex; align-items: center; }
.app { position: relative; width: 44px; height: 40px; display: grid; place-items: center; }
.app svg { width: 24px; height: 24px; }
.app.current { background: rgba(255, 255, 255, .6) content-box; padding: 0 3px; }
.app.current::after, .app.running::after { content: ""; position: absolute; bottom: 1px; left: 14px; width: 16px; height: 3px; border-radius: 2px; background: #0a76d0; }
.app.running::after { left: 19px; width: 6px; background: #888; }
.app .face { position: absolute; top: 3px; right: 5px; width: 16px; height: 16px; }
.tsearch { display: flex; align-items: center; gap: 10px; width: 218px; height: 31px; margin: 0 2px 0 4px; padding: 0 3px 0 10px; border-radius: 16px; background: #fcf7f3; box-shadow: 0 1px 2px rgba(0, 0, 0, .3); }
.tsearch input { flex: 1; min-width: 0; font-size: 12px; outline: 0; }
.tsearch input::placeholder { color: #555; opacity: 1; }
.tray { display: flex; align-items: center; justify-content: flex-end; padding-right: 19px; line-height: 16px; color: #111; }
.cloud { margin: 0 18px; }
.lang { text-align: center; margin-right: 18px; }
.sys { display: flex; gap: 8px; margin-right: 15px; }
.clock { text-align: right; font-size: 12px; }
```
